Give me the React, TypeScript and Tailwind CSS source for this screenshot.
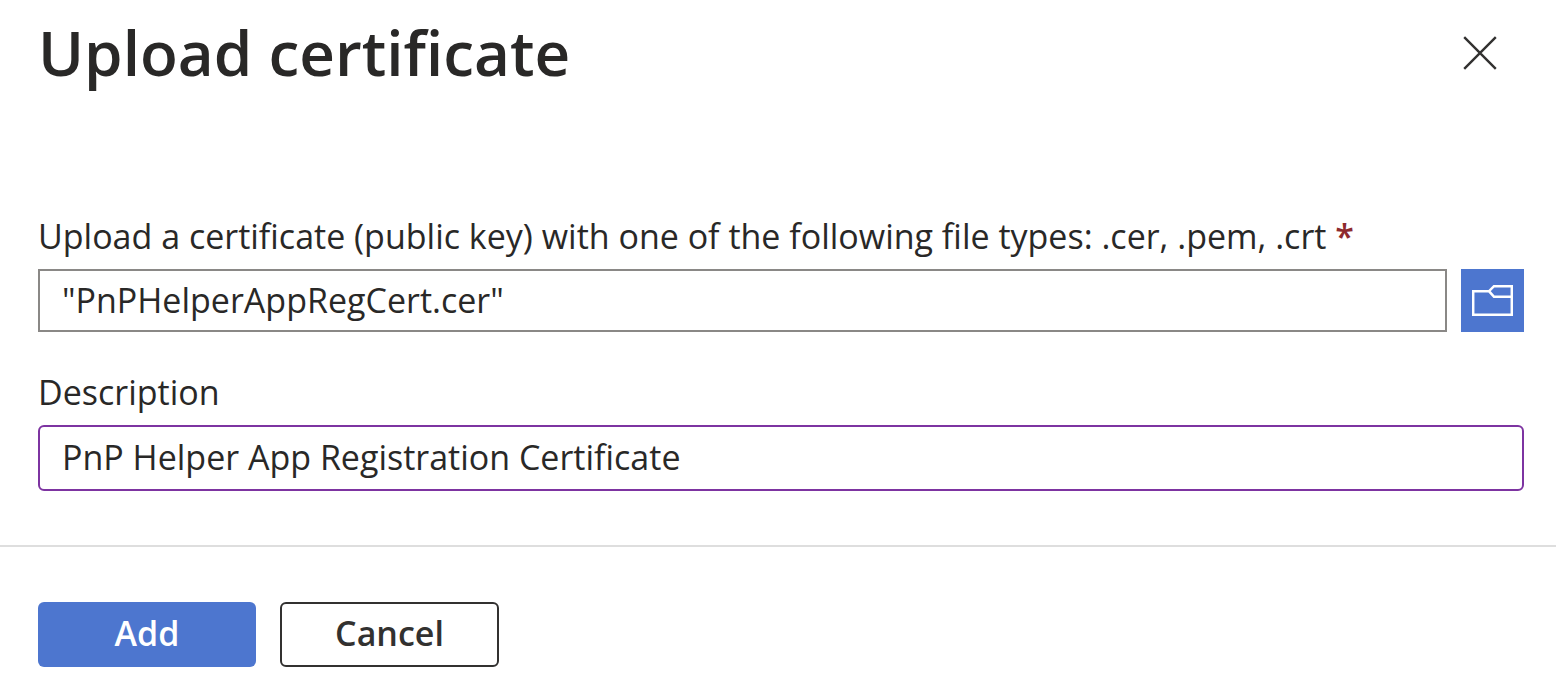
import { useState } from "react"

function CloseIcon() {
  return (
    <svg width="34" height="34" viewBox="0 0 34 34" fill="none" stroke="#323130" strokeWidth="2.4" aria-hidden="true">
      <path d="M1.2 1.2 32.8 32.8M32.8 1.2 1.2 32.8" />
    </svg>
  )
}

function FolderIcon() {
  return (
    <svg width="41" height="31" viewBox="0 0 41 31" fill="none" stroke="white" strokeWidth="2.5" aria-hidden="true">
      <path d="M17 6.2H1.2V29.8H39.8V1.2H22L17 6.2 22 11.8H39.8" />
    </svg>
  )
}

export default function App() {
  const [description, setDescription] = useState("PnP Helper App Registration Certificate")

  return (
    <main className="bg-white font-['Open_Sans','Noto_Sans',sans-serif] text-[34px] leading-[46px] text-[#292827]">
      <header className="flex items-start justify-between pt-2 pr-[59px] pl-[38px]">
        <h1 className="text-[62px] leading-[88px] font-semibold">Upload certificate</h1>
        <button type="button" aria-label="Close" className="mt-7">
          <CloseIcon />
        </button>
      </header>

      <form>
        <div className="mt-[117px] pr-8 pl-[38px]">
          <label htmlFor="certificate" className="block">
            Upload a certificate (public key) with one of the following file types: .cer, .pem, .crt{" "}
            <span className="font-semibold text-[#8e2a2e]">*</span>
          </label>
          <div className="mt-[10px] flex gap-[14px]">
            <input
              id="certificate"
              type="text"
              readOnly
              required
              value={'"PnPHelperAppRegCert.cer"'}
              className="h-[63px] min-w-0 flex-1 border-2 border-[#8a8886] px-[22px] pb-[2px] outline-none"
            />
            <button
              type="button"
              aria-label="Browse files"
              className="flex h-[63px] w-[63px] items-center justify-center bg-[#4d76cf]"
            >
              <FolderIcon />
            </button>
          </div>

          <label htmlFor="description" className="mt-[37px] block">
            Description
          </label>
          <input
            id="description"
            type="text"
            value={description}
            onChange={(e) => setDescription(e.target.value)}
            className="mt-[10px] h-[66px] w-full rounded-md border-2 border-[#7d34a1] px-[22px] pb-[2px] outline-none"
          />
        </div>

        <footer className="mt-[54px] flex gap-6 border-t-2 border-[#dedede] pt-[55px] pb-[6px] pl-[38px] font-semibold">
          <button type="submit" className="h-[65px] w-[218px] rounded-md bg-[#4d76cf] pb-1 text-white">
            Add
          </button>
          <button type="button" className="h-[65px] w-[219px] rounded-md border-2 border-[#323130] pb-1 text-[#323130]">
            Cancel
          </button>
        </footer>
      </form>
    </main>
  )
}
